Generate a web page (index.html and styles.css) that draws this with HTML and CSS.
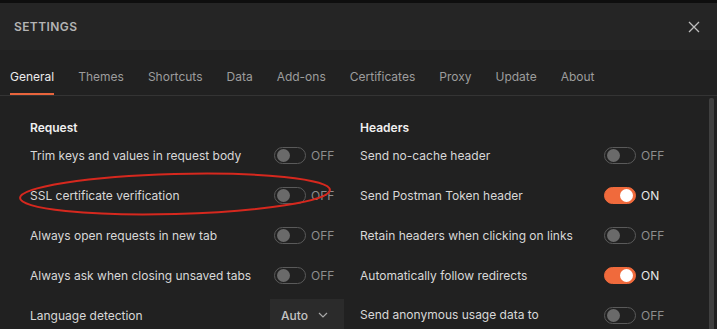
FILE: index.html
```html
<!DOCTYPE html>
<html lang="en">
<head>
    <meta charset="UTF-8">
    <meta name="viewport" content="width=device-width, initial-scale=1.0">
    <title>Settings</title>
    <link rel="stylesheet" href="styles.css">
</head>
<body>
    <div class="window">
        <div class="topstrip"></div>
        <div class="header">
            <h1>SETTINGS</h1>
            <span class="close">
                <svg width="12" height="12" viewBox="0 0 12 12"><path d="M1 1L11 11M11 1L1 11" stroke="#bdbdbd" stroke-width="1.3" fill="none"/></svg>
            </span>
        </div>
        <div class="tabs">
            <span class="tab active">General</span>
            <span class="tab">Themes</span>
            <span class="tab">Shortcuts</span>
            <span class="tab">Data</span>
            <span class="tab">Add-ons</span>
            <span class="tab">Certificates</span>
            <span class="tab">Proxy</span>
            <span class="tab">Update</span>
            <span class="tab">About</span>
        </div>

        <div class="content">
            <div class="column">
                <h3>Request</h3>
                <div class="row">
                    <span class="label">Trim keys and values in request body</span>
                    <span class="switch"><span class="knob"></span></span><span class="state">OFF</span>
                </div>
                <div class="row">
                    <span class="label">SSL certificate verification</span>
                    <span class="switch"><span class="knob"></span></span><span class="state">OFF</span>
                </div>
                <div class="row">
                    <span class="label">Always open requests in new tab</span>
                    <span class="switch"><span class="knob"></span></span><span class="state">OFF</span>
                </div>
                <div class="row">
                    <span class="label">Always ask when closing unsaved tabs</span>
                    <span class="switch"><span class="knob"></span></span><span class="state">OFF</span>
                </div>
                <div class="row">
                    <span class="label">Language detection</span>
                    <span class="select">Auto
                        <svg width="10" height="6" viewBox="0 0 10 6"><path d="M1 1L5 5L9 1" stroke="#a8a8a8" stroke-width="1.2" fill="none"/></svg>
                    </span>
                </div>
            </div>

            <div class="column">
                <h3>Headers</h3>
                <div class="row">
                    <span class="label">Send no-cache header</span>
                    <span class="switch"><span class="knob"></span></span><span class="state">OFF</span>
                </div>
                <div class="row">
                    <span class="label">Send Postman Token header</span>
                    <span class="switch on"><span class="knob"></span></span><span class="state on">ON</span>
                </div>
                <div class="row">
                    <span class="label">Retain headers when clicking on links</span>
                    <span class="switch"><span class="knob"></span></span><span class="state">OFF</span>
                </div>
                <div class="row">
                    <span class="label">Automatically follow redirects</span>
                    <span class="switch on"><span class="knob"></span></span><span class="state on">ON</span>
                </div>
                <div class="row top">
                    <span class="label">Send anonymous usage data to Postman</span>
                    <span class="switch"><span class="knob"></span></span><span class="state">OFF</span>
                </div>
            </div>

            <div class="scrollbar"></div>
        </div>

        <svg class="mark" width="320" height="48" viewBox="0 0 320 48">
            <ellipse cx="158" cy="23" rx="155" ry="20" transform="rotate(-1.5 158 23)" stroke="#d6281e" stroke-width="2" fill="none"/>
        </svg>
    </div>
</body>
</html>
```

FILE: styles.css
```css
* {
    margin: 0;
    padding: 0;
    box-sizing: border-box;
}

body {
    width: 717px;
    height: 329px;
    overflow: hidden;
    background: #212121;
    font-family: Inter, "Noto Sans", sans-serif;
    font-size: 12px;
    color: #d8d8d8;
}

.window {
    position: relative;
    height: 329px;
    overflow: hidden;
}

.topstrip {
    height: 3px;
    background: #0e0e0e;
}

.header {
    height: 47px;
    background: #252525;
    display: flex;
    align-items: center;
    justify-content: space-between;
    padding: 0 17px 0 14px;
}

.header h1 {
    font-size: 12px;
    font-weight: 600;
    letter-spacing: 0.4px;
    color: #b4b4b4;
}

.close {
    display: flex;
}

.tabs {
    height: 46px;
    display: flex;
    gap: 24px;
    padding: 0 10px;
    border-bottom: 1px solid #343434;
}

.tab {
    display: flex;
    align-items: center;
    color: #9d9d9d;
    border-bottom: 2px solid transparent;
    padding-top: 9px;
}

.tab.active {
    color: #ececec;
    border-bottom-color: #e8643c;
}

.content {
    position: relative;
    display: flex;
    padding: 25px 0 0 30px;
}

.column {
    width: 330px;
}

.column h3 {
    font-size: 12px;
    font-weight: 600;
    color: #f0f0f0;
    height: 14px;
    line-height: 14px;
}

.row {
    display: flex;
    align-items: center;
    height: 40px;
}

.label {
    width: 244px;
    line-height: 19px;
}

.row.top {
    align-items: flex-start;
}

.row.top .label {
    width: 222px;
    margin-right: 22px;
    margin-top: 10px;
}

.row.top .switch {
    margin-top: 12px;
}

.row.top .state {
    margin-top: 12px;
}

.switch {
    position: relative;
    width: 32px;
    height: 17px;
    border: 1px solid #5a5a5a;
    border-radius: 9px;
}

.switch .knob {
    position: absolute;
    top: 1px;
    left: 2px;
    width: 13px;
    height: 13px;
    border-radius: 50%;
    background: #6a6a6a;
}

.switch.on {
    background: #f06a3c;
    border-color: #f06a3c;
}

.switch.on .knob {
    left: auto;
    right: 2px;
    background: #ffffff;
}

.state {
    margin-left: 5px;
    color: #8e8e8e;
    line-height: 17px;
}

.state.on {
    color: #e6e6e6;
}

.select {
    display: flex;
    align-items: center;
    justify-content: space-between;
    width: 74px;
    height: 32px;
    margin-left: -4px;
    padding: 0 16px 0 11px;
    background: #2b2b2b;
    font-weight: 500;
    color: #c4c4c4;
}

.scrollbar {
    position: absolute;
    top: 2px;
    right: 3px;
    width: 5px;
    height: 240px;
    background: #404040;
    border-radius: 2px;
}

.mark {
    position: absolute;
    left: 17px;
    top: 171px;
}
```
